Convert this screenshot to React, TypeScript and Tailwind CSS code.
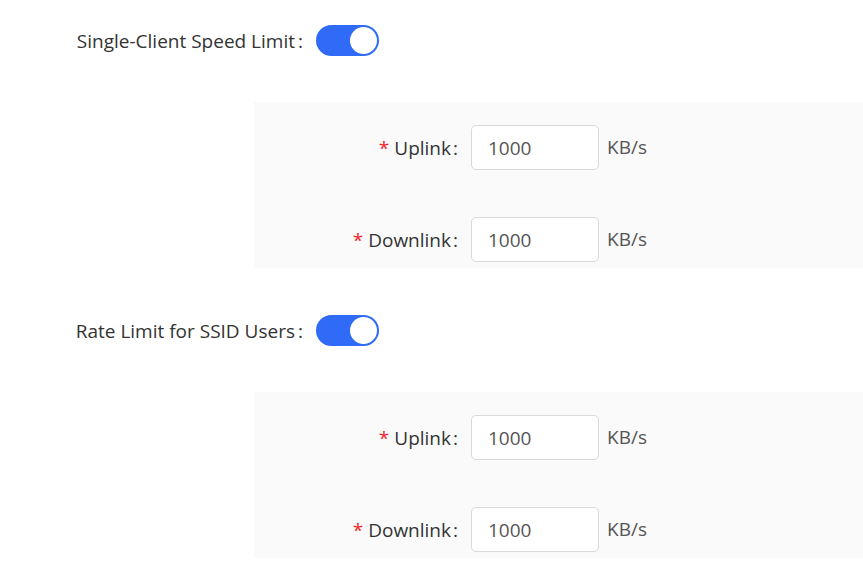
import { useState } from "react";

type Limit = { label: string; value: string };

const Toggle = ({ on, onClick }: { on: boolean; onClick: () => void }) => (
  <button
    type="button"
    onClick={onClick}
    className={`relative block h-[31px] w-[63px] rounded-full ${on ? "bg-[#2f6bf6]" : "bg-[#bfbfbf]"}`}
  >
    <span
      className={`absolute top-[2px] h-[27px] w-[27px] rounded-full bg-white ${on ? "right-[2px]" : "left-[2px]"}`}
    />
  </button>
);

const RateRow = ({ label, value }: Limit) => (
  <div className="flex items-center">
    <div className="w-[206px] pr-[2px] text-right text-[19px] leading-[28px] text-[#333]">
      <span className="mr-[5px] text-[#f5222d]">*</span>
      {label}
      <span className="ml-[2px]">:</span>
    </div>
    <input
      defaultValue={value}
      className="ml-[11px] h-[45px] w-[128px] rounded-[5px] border border-[#d9d9d9] bg-white px-[16px] text-[19px] text-[#555] outline-none"
    />
    <span className="ml-[8px] text-[19px] text-[#555]">KB/s</span>
  </div>
);

const Section = ({ title }: { title: string }) => {
  const [on, setOn] = useState(true);
  return (
    <div>
      <div className="flex h-[31px] items-center">
        <div className="w-[305px] pr-[2px] text-right text-[19px] leading-[28px] text-[#333]">
          {title}
          <span className="ml-[3px]">:</span>
        </div>
        <div className="ml-[11px] flex">
          <Toggle on={on} onClick={() => setOn(!on)} />
        </div>
      </div>
      {on && (
        <div className="ml-[254px] mt-[46px] flex flex-col gap-[47px] bg-[#fafafa] pb-[6px] pt-[23px]">
          <RateRow label="Uplink" value="1000" />
          <RateRow label="Downlink" value="1000" />
        </div>
      )}
    </div>
  );
};

export default function App() {
  return (
    <div
      className="min-h-[570px] w-[863px] bg-white pt-[25px]"
      style={{ fontFamily: '"Open Sans", "Noto Sans", sans-serif' }}
    >
      <div className="flex flex-col gap-[47px]">
        <Section title="Single-Client Speed Limit" />
        <Section title="Rate Limit for SSID Users" />
      </div>
    </div>
  );
}
